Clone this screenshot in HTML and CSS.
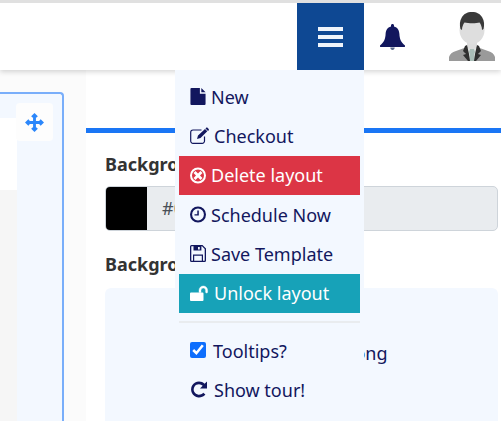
FILE: index.html
```html
<!DOCTYPE html>
<html lang="en">
<head>
    <meta charset="UTF-8">
    <meta name="viewport" content="width=device-width, initial-scale=1.0">
    <title>Layout editor</title>
    <link rel="stylesheet" href="styles.css">
</head>
<body>
    <header class="topbar">
        <button class="menu-toggle" type="button" aria-label="Menu">
            <span></span><span></span><span></span>
        </button>
        <svg class="bell" viewBox="0 0 25 26" aria-hidden="true">
            <path d="M12.5 0c.9 0 1.500.6 1.500 1.500v1c3.700.9 5.200 3.800 5.400 7.500.2 4.700 1.600 8.500 5.600 11.500.3.700-.1 1.500-.8 1.500H.8c-.7 0-1.100-.8-.8-1.500 4-3 5.400-6.800 5.600-11.500.2-3.700 1.700-6.600 5.400-7.500v-1c0-.9.6-1.500 1.500-1.500z"/>
            <path fill="#5a6a8c" d="M10.300 23.500h4.400c0 1.500-1 2.500-2.200 2.500s-2.200-1-2.200-2.500z"/>
        </svg>
        <svg class="avatar" viewBox="0 0 47 49" aria-hidden="true">
            <path fill="#dcdcdc" d="M18 26h10v10l-5 4-5-4z"/>
            <path fill="#9a9a9a" d="M0 49v-4c1-3 3-5 7-6l11-4 5 6 5-6 11 4c4 1 6 3 7 6v4z"/>
            <path fill="#e4e6e5" d="M17 35l6 3 6-3 2 3-5 11h-6l-5-11z"/>
            <path fill="#a9bdb7" d="M21 37h4l1 3-1 3 1 6h-6l1-6-1-3z"/>
            <path fill="#2f2f2f" d="M16 34l2-1 2 9 1 7h-2l-5-6 3-1-3-3zM30 34l-2-1-2 9-1 7h2l5-6-3-1 3-3z"/>
            <ellipse fill="#dedede" cx="23" cy="18" rx="12.500" ry="14"/>
            <path fill="#3a3a3a" d="M11.500 17c-1-4-1-8 1.500-12 2-3 5-5 10-5s8 2 10 5c2.500 4 2.500 8 1.500 12l-1.500 1c0-3-1-5.500-2.500-7.500-3 1-11 1-15 0-1.500 2-2.500 4.500-2.500 7.500z"/>
        </svg>
    </header>

    <div class="workspace">
        <aside class="sidebar">
            <div class="panel">
                <div class="canvas">
                    <div class="canvas-top"></div>
                    <div class="canvas-rest"></div>
                </div>
                <div class="rail">
                    <button class="move-btn" type="button" aria-label="Move">
                        <svg viewBox="0 0 20 20" aria-hidden="true">
                            <path d="M10 0l3.500 3.500-1.300 1.300H11.500V8.500h3.700V7.800l1.300-1.300L20 10l-3.500 3.500-1.300-1.300v-.7h-3.700v3.700h.7l1.300 1.300L10 20l-3.500-3.500 1.300-1.300h.7v-3.700H4.800v.7l-1.300 1.300L0 10l3.500-3.500 1.300 1.300v.7h3.700V4.800h-.7L6.500 3.500z"/>
                        </svg>
                    </button>
                </div>
            </div>
        </aside>

        <main class="content">
            <div class="rule"></div>
            <h4 class="field-label">Background color</h4>
            <div class="color-field">
                <span class="swatch"></span>
                <span class="color-value">#000000</span>
            </div>
            <h4 class="field-label second">Background image</h4>
            <div class="image-box">
                <p>Image name too long</p>
            </div>
        </main>
    </div>

    <nav class="dropdown">
        <a class="item" href="#">
            <svg class="ico" viewBox="0 0 16 18"><path d="M1 0h9v6h6v11a1 1 0 0 1-1 1H1a1 1 0 0 1-1-1V1a1 1 0 0 1 1-1zM11.500 0L16 4.500h-4.500z"/></svg>
            New
        </a>
        <a class="item" href="#">
            <svg class="ico ico-wide" viewBox="0 0 19 17"><path fill="none" stroke="currentColor" stroke-width="1.200" d="M14.500 9.500V14a2.300 2.300 0 0 1-2.300 2.300H3A2.300 2.300 0 0 1 .7 14V5.300A2.300 2.300 0 0 1 3 3h8.500"/><path d="M15 2l2.300 2.300L10.500 11l-3.500 1 1-3.500zM16 1c.6-.6 1.200-.5 1.700 0l.8.8c.5.500.6 1.100 0 1.700l-.5.500L15.500 1.500z"/></svg>
            Checkout
        </a>
        <a class="item danger" href="#">
            <svg class="ico" viewBox="0 0 16 16"><path fill-rule="evenodd" d="M8 0a8 8 0 1 1 0 16A8 8 0 0 1 8 0zm0 2a6 6 0 1 0 0 12A6 6 0 0 0 8 2zM5.500 3.500L8 6l2.500-2.500 2 2L10 8l2.500 2.500-2 2L8 10l-2.500 2.500-2-2L6 8 3.500 5.500z"/></svg>
            Delete layout
        </a>
        <a class="item" href="#">
            <svg class="ico" viewBox="0 0 16 16"><path fill-rule="evenodd" d="M8 0a8 8 0 1 1 0 16A8 8 0 0 1 8 0zm0 2.100a5.900 5.900 0 1 0 0 11.800A5.900 5.900 0 0 0 8 2.100zM7.300 4h1.500v5H4.500V7.700h2.800z"/></svg>
            Schedule Now
        </a>
        <a class="item" href="#">
            <svg class="ico" viewBox="0 0 16 17"><path fill-rule="evenodd" d="M1.500 0h11L16 3.500v12a1.500 1.500 0 0 1-1.500 1.500h-13A1.500 1.500 0 0 1 0 15.500v-14A1.500 1.500 0 0 1 1.500 0zm.2 1.200a.4.400 0 0 0-.4.400v13.800c0 .2.200.4.400.4H3V9.500h10v6.300h1.300c.2 0 .4-.2.400-.4V4L12 1.200h-.6v4.400H3.500V1.200zM4.200 10.800v5h7.600v-5zM8 2v2.600h1.800V2z"/></svg>
            Save Template
        </a>
        <a class="item info" href="#">
            <svg class="ico ico-wide" viewBox="0 0 19 15"><path d="M1 6.500h11.500a1 1 0 0 1 1 1V14a1 1 0 0 1-1 1H1a1 1 0 0 1-1-1V7.500a1 1 0 0 1 1-1z"/><path d="M9 6.500V4.300a4.300 4.300 0 0 1 8.600 0V6a1 1 0 0 1-2 0V4.300a2.300 2.300 0 0 0-4.600 0v2.200z" stroke="currentColor" stroke-width=".4"/></svg>
            Unlock layout
        </a>
        <hr class="divider">
        <label class="item check-item">
            <input type="checkbox" checked>
            Tooltips?
        </label>
        <a class="item" href="#">
            <svg class="ico tour-ico" viewBox="0 0 16 16"><path d="M13.600 2.300L16 0v7H9l2.700-2.700A5.300 5.300 0 0 0 8 2.700a5.300 5.300 0 1 0 4.200 8.500l2.200 1.700A8 8 0 1 1 8 0c2.200 0 4.100.9 5.600 2.300z"/></svg>
            Show tour!
        </a>
    </nav>
</body>
</html>
```

FILE: styles.css
```css
html, body {
    height: 100%;
}
body {
    font-family: 'Noto Sans', 'Open Sans', sans-serif;
    font-size: 18px;
    margin: 0;
    overflow: hidden;
    background-color: #fff;
    color: #333;
    display: flex;
    flex-direction: column;
    border-top: 3px solid #e0e0e0;
    box-sizing: border-box;
}

/* top bar */
.topbar {
    height: 67px;
    flex: none;
    display: flex;
    align-items: flex-start;
    justify-content: flex-end;
    background-color: #fff;
    box-shadow: 0 2px 5px rgba(0, 0, 0, 0.16);
    position: relative;
    z-index: 2;
}
.menu-toggle {
    width: 67px;
    height: 67px;
    border: none;
    padding: 0;
    background-color: #0e4893;
    display: flex;
    flex-direction: column;
    align-items: center;
    justify-content: center;
    gap: 4px;
}
.menu-toggle span {
    display: block;
    width: 25px;
    height: 4px;
    background-color: #eef4fb;
}
.bell {
    width: 25px;
    height: 26px;
    margin: 21px 0 0 16px;
    fill: #12175e;
}
.avatar {
    width: 47px;
    height: 49px;
    margin: 9px 5px 0 44px;
}

/* page below the bar */
.workspace {
    flex: 1;
    min-height: 0;
    display: flex;
}
.sidebar {
    width: 86px;
    flex: none;
    padding: 22px 22px 0 0;
    box-sizing: border-box;
    background-color: #fbfbfb;
}
.panel {
    height: 100%;
    margin-left: -4px;
    display: flex;
    box-sizing: border-box;
    border: 2px solid #79aefa;
    border-bottom: none;
    border-radius: 4px 4px 0 0;
    background-color: #f3f8ff;
}
.canvas {
    width: 19px;
    flex: none;
    padding-top: 24px;
    display: flex;
    flex-direction: column;
}
.canvas-top {
    height: 72px;
    background-color: #fff;
}
.canvas-rest {
    flex: 1;
    background-color: #f6f6f6;
}
.rail {
    flex: 1;
    padding-top: 9px;
}
.move-btn {
    display: flex;
    align-items: center;
    justify-content: center;
    width: 37px;
    height: 38px;
    padding: 0;
    margin-left: -1px;
    border: none;
    border-radius: 4px;
    background-color: #fdfdfd;
    position: relative;
}
.move-btn svg {
    width: 19px;
    height: 19px;
    fill: #2b87fb;
}

.content {
    flex: 1;
    min-width: 0;
    padding-top: 58px;
    display: flex;
    flex-direction: column;
}
.rule {
    height: 5px;
    flex: none;
    background-color: #1a76f5;
}
.field-label {
    margin: 18px 0 0 19px;
    font-size: 18px;
    line-height: 26px;
    font-weight: 700;
}
.field-label.second {
    margin-top: 20px;
}
.color-field {
    display: flex;
    flex: none;
    height: 45px;
    margin: 9px 3px 0 19px;
    border: 1px solid #ced4da;
    border-radius: 5px;
    background-color: #e9ecef;
    overflow: hidden;
    box-sizing: border-box;
}
.swatch {
    width: 41px;
    background-color: #000;
}
.color-value {
    padding-left: 15px;
    line-height: 43px;
    color: #495057;
}
.image-box {
    flex: 1;
    margin: 11px 3px 0 19px;
    border-radius: 6px 6px 0 0;
    background-color: #f3f8ff;
}
.image-box p {
    margin: 0;
    padding: 53px 0 0 100px;
    color: #12175e;
}

/* open dropdown */
.dropdown {
    position: absolute;
    top: 70px;
    left: 175px;
    z-index: 3;
    width: 189px;
    height: 351px;
    padding: 7px 4px 0;
    box-sizing: border-box;
    background-color: #f3f8ff;
    color: #12175e;
}
.item {
    display: flex;
    align-items: center;
    gap: 5px;
    height: 39.33px;
    padding-left: 11px;
    color: inherit;
    text-decoration: none;
    white-space: nowrap;
}
.item.danger {
    background-color: #dc3545;
    color: #fff;
}
.item.info {
    background-color: #17a2b8;
    color: #fff;
}
.ico {
    width: 16px;
    height: 17px;
    flex: none;
    fill: currentColor;
}
.ico-wide {
    width: 19px;
}
.divider {
    height: 2px;
    margin: 8px 0;
    border: none;
    background-color: #e9ecef;
}
.check-item input {
    width: 16px;
    height: 16px;
    margin: 0 2px 2px 0;
    accent-color: #0d6efd;
}
.tour-ico {
    margin-left: 1px;
    margin-right: 2px;
}
```
